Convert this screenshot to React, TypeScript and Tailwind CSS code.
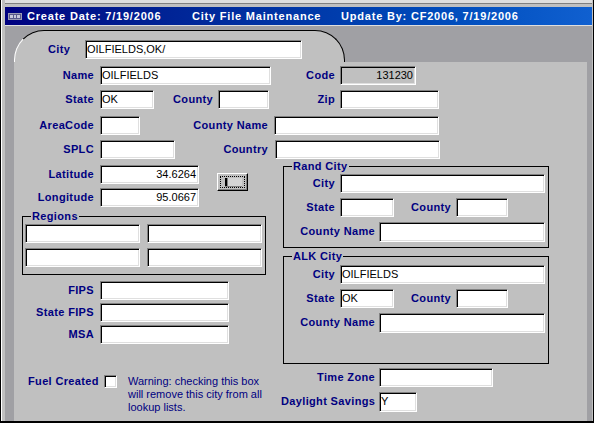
import React from 'react';

const lblBase =
  'shrink-0 text-[11px] font-bold text-[#000080] tracking-[0.35px] leading-[13px] whitespace-nowrap';
const box =
  'shrink-0 h-[19px] border border-t-[#808080] border-l-[#808080] border-b-white border-r-white shadow-[inset_1px_1px_0_#000,inset_-1px_-1px_0_#dfdfdf] text-[11px] text-black leading-[17px] px-[1px] whitespace-nowrap overflow-hidden';

function Lbl({
  className = '',
  left = false,
  children,
}: {
  className?: string;
  left?: boolean;
  children: React.ReactNode;
}) {
  return <span className={`${lblBase} ${left ? 'text-left' : 'text-right'} ${className}`}>{children}</span>;
}

function Field({
  className = '',
  value = '',
  right = false,
  gray = false,
}: {
  className?: string;
  value?: string;
  right?: boolean;
  gray?: boolean;
}) {
  return (
    <div className={`${box} ${gray ? 'bg-[#c0c0c0]' : 'bg-white'} ${right ? 'text-right' : ''} ${className}`}>
      {value}
    </div>
  );
}

function Group({ title, className = '', children }: { title: string; className?: string; children: React.ReactNode }) {
  return (
    <div className={`relative border border-black ${className}`}>
      <span className={`${lblBase} absolute left-[8px] top-[-7px] px-[1px] bg-[#c0c0c0]`}>{title}</span>
      {children}
    </div>
  );
}

const row = 'flex items-center h-[19px]';

export default function App() {
  return (
    <div className="w-[594px] h-[423px] overflow-hidden bg-[#c0c0c0] border-x border-b-2 border-black flex flex-col font-['Liberation_Sans',Arial,sans-serif]">
      <div className="flex-1 flex flex-col border-l border-white pl-[3px] pr-[1px]">
        <div className="h-[3px] bg-[#dfdfdf]" />
        <div className="h-[1px] bg-[#808080]" />
        <div className="h-[3px]" />

        {/* title bar */}
        <div className="h-[18px] shrink-0 flex items-center bg-linear-to-r from-[#000080] to-[#1060d0] text-white text-[11px] font-bold tracking-[0.8px] whitespace-nowrap">
          <svg width="14" height="7" viewBox="0 0 14 7" className="ml-[3px] shrink-0">
            <rect width="14" height="7" fill="#9c9cb4" />
            <rect x="1" y="1" width="12" height="5" fill="#5a5a8c" />
            <rect x="2" y="2" width="3" height="3" fill="#c8c8dc" />
            <rect x="6" y="2" width="2" height="3" fill="#c8c8dc" />
            <rect x="9" y="2" width="3" height="3" fill="#c8c8dc" />
          </svg>
          <span className="ml-[5px] w-[165px]">Create Date: 7/19/2006</span>
          <span className="w-[149px]">City File Maintenance</span>
          <span>Update By: CF2006, 7/19/2006</span>
        </div>
        <div className="h-[1px] bg-[#dfdfdf]" />

        {/* client */}
        <div className="flex-1 flex flex-col bg-[#a0a0a4] pl-[9px] pr-[5px] pt-[4px]">
          {/* tab */}
          <div className="w-[331px] h-[32px] shrink-0 rounded-t-[30px] border-t border-x border-t-black border-l-white border-r-black bg-[#c0c0c0] flex items-center pl-[33px] pt-[5px]">
            <Lbl left className="w-[37px]">City</Lbl>
            <Field className="w-[217px] h-[18px]" value="OILFIELDS,OK/" />
          </div>

          {/* panel */}
          <div className="flex-1 bg-[#c0c0c0] pt-[4px] flex flex-col">
            <div className={row}>
              <Lbl className="w-[80px]">Name</Lbl>
              <Field className="ml-[6px] w-[171px]" value="OILFIELDS" />
              <Lbl className="w-[64px]">Code</Lbl>
              <Field className="ml-[5px] w-[76px] pr-[2px]" value="131230" right gray />
            </div>
            <div className={`${row} mt-[5px]`}>
              <Lbl className="w-[80px]">State</Lbl>
              <Field className="ml-[6px] w-[54px]" value="OK" />
              <Lbl className="w-[59px]">County</Lbl>
              <Field className="ml-[5px] w-[51px]" />
              <Lbl className="w-[66px]">Zip</Lbl>
              <Field className="ml-[5px] w-[99px]" />
            </div>
            <div className={`${row} mt-[7px]`}>
              <Lbl className="w-[80px]">AreaCode</Lbl>
              <Field className="ml-[6px] w-[40px]" />
              <Lbl className="w-[128px]">County Name</Lbl>
              <Field className="ml-[6px] w-[165px]" />
            </div>
            <div className={`${row} mt-[5px]`}>
              <Lbl className="w-[80px]">SPLC</Lbl>
              <Field className="ml-[6px] w-[75px]" />
              <Lbl className="w-[93px]">Country</Lbl>
              <Field className="ml-[7px] w-[165px]" />
            </div>

            <div className="flex items-start mt-[6px]">
              {/* left column */}
              <div className="w-[269px] shrink-0 flex flex-col">
                <div className="flex items-start">
                  <div className="flex flex-col gap-[4px]">
                    <div className={row}>
                      <Lbl className="w-[80px]">Latitude</Lbl>
                      <Field className="ml-[6px] w-[99px] pr-[2px]" value="34.6264" right />
                    </div>
                    <div className={row}>
                      <Lbl className="w-[80px]">Longitude</Lbl>
                      <Field className="ml-[6px] w-[99px] pr-[2px]" value="95.0667" right />
                    </div>
                  </div>
                  <div className="ml-[18px] mt-[8px] w-[31px] h-[18px] border border-t-white border-l-white border-b-black border-r-black shadow-[inset_-1px_-1px_0_#808080] bg-[#c0c0c0] p-[2px]">
                    <div className="h-full border border-dotted border-black flex items-center pl-[4px]">
                      <svg width="18" height="9" viewBox="0 0 18 9">
                        <rect x="3" y="0" width="14" height="8" fill="#d4d4d4" />
                        <rect x="0" y="0" width="2" height="9" fill="#000" />
                        <rect x="2" y="0" width="1" height="9" fill="#808080" />
                        <rect x="0" y="8" width="17" height="1" fill="#808080" />
                      </svg>
                    </div>
                  </div>
                </div>

                <Group title="Regions" className="mt-[9px] ml-[8px] w-[244px] h-[59px] pt-[7px] pl-[2px]">
                  <div className="grid grid-cols-[115px_115px] gap-x-[7px] gap-y-[5px]">
                    <Field />
                    <Field />
                    <Field />
                    <Field />
                  </div>
                </Group>

                <div className="flex flex-col gap-[3px] mt-[6px]">
                  <div className={row}>
                    <Lbl className="w-[80px]">FIPS</Lbl>
                    <Field className="ml-[6px] w-[129px]" />
                  </div>
                  <div className={row}>
                    <Lbl className="w-[80px]">State FIPS</Lbl>
                    <Field className="ml-[6px] w-[129px]" />
                  </div>
                  <div className={row}>
                    <Lbl className="w-[80px]">MSA</Lbl>
                    <Field className="ml-[6px] w-[129px]" />
                  </div>
                </div>

                <div className="flex items-start mt-[31px]">
                  <Lbl left className="ml-[14px] w-[71px]">Fuel Created</Lbl>
                  <div className="ml-[5px] w-[13px] h-[13px] shrink-0 bg-white border border-t-[#808080] border-l-[#808080] border-b-white border-r-white shadow-[inset_1px_1px_0_#000,inset_-1px_-1px_0_#dfdfdf]" />
                  <p className="ml-[11px] text-[11px] leading-[13px] text-[#000080] whitespace-nowrap">
                    Warning: checking this box
                    <br />
                    will remove this city from all
                    <br />
                    lookup lists.
                  </p>
                </div>
              </div>

              {/* right column */}
              <div className="w-[266px] shrink-0 flex flex-col mt-[1px]">
                <Group title="Rand City" className="h-[82px] pt-[7px] flex flex-col gap-[5px]">
                  <div className={row}>
                    <Lbl className="w-[51px]">City</Lbl>
                    <Field className="ml-[5px] w-[205px]" />
                  </div>
                  <div className={row}>
                    <Lbl className="w-[51px]">State</Lbl>
                    <Field className="ml-[5px] w-[54px]" />
                    <Lbl className="w-[57px]">County</Lbl>
                    <Field className="ml-[5px] w-[52px]" />
                  </div>
                  <div className={row}>
                    <Lbl className="w-[91px]">County Name</Lbl>
                    <Field className="ml-[4px] w-[166px] h-[20px]" />
                  </div>
                </Group>

                <Group title="ALK City" className="mt-[8px] h-[108px] pt-[8px] flex flex-col gap-[5px]">
                  <div className={row}>
                    <Lbl className="w-[51px]">City</Lbl>
                    <Field className="ml-[5px] w-[205px]" value="OILFIELDS" />
                  </div>
                  <div className={row}>
                    <Lbl className="w-[51px]">State</Lbl>
                    <Field className="ml-[5px] w-[54px]" value="OK" />
                    <Lbl className="w-[57px]">County</Lbl>
                    <Field className="ml-[5px] w-[52px]" />
                  </div>
                  <div className={row}>
                    <Lbl className="w-[91px]">County Name</Lbl>
                    <Field className="ml-[4px] w-[166px] h-[20px]" />
                  </div>
                </Group>

                <div className={`${row} mt-[4px]`}>
                  <Lbl className="w-[92px]">Time Zone</Lbl>
                  <Field className="ml-[4px] w-[114px]" />
                </div>
                <div className={`${row} mt-[5px]`}>
                  <Lbl className="-ml-[2px] w-[94px]">Daylight Savings</Lbl>
                  <Field className="ml-[4px] w-[38px] h-[20px]" value="Y" />
                </div>
              </div>
            </div>
          </div>
        </div>
      </div>
    </div>
  );
}
